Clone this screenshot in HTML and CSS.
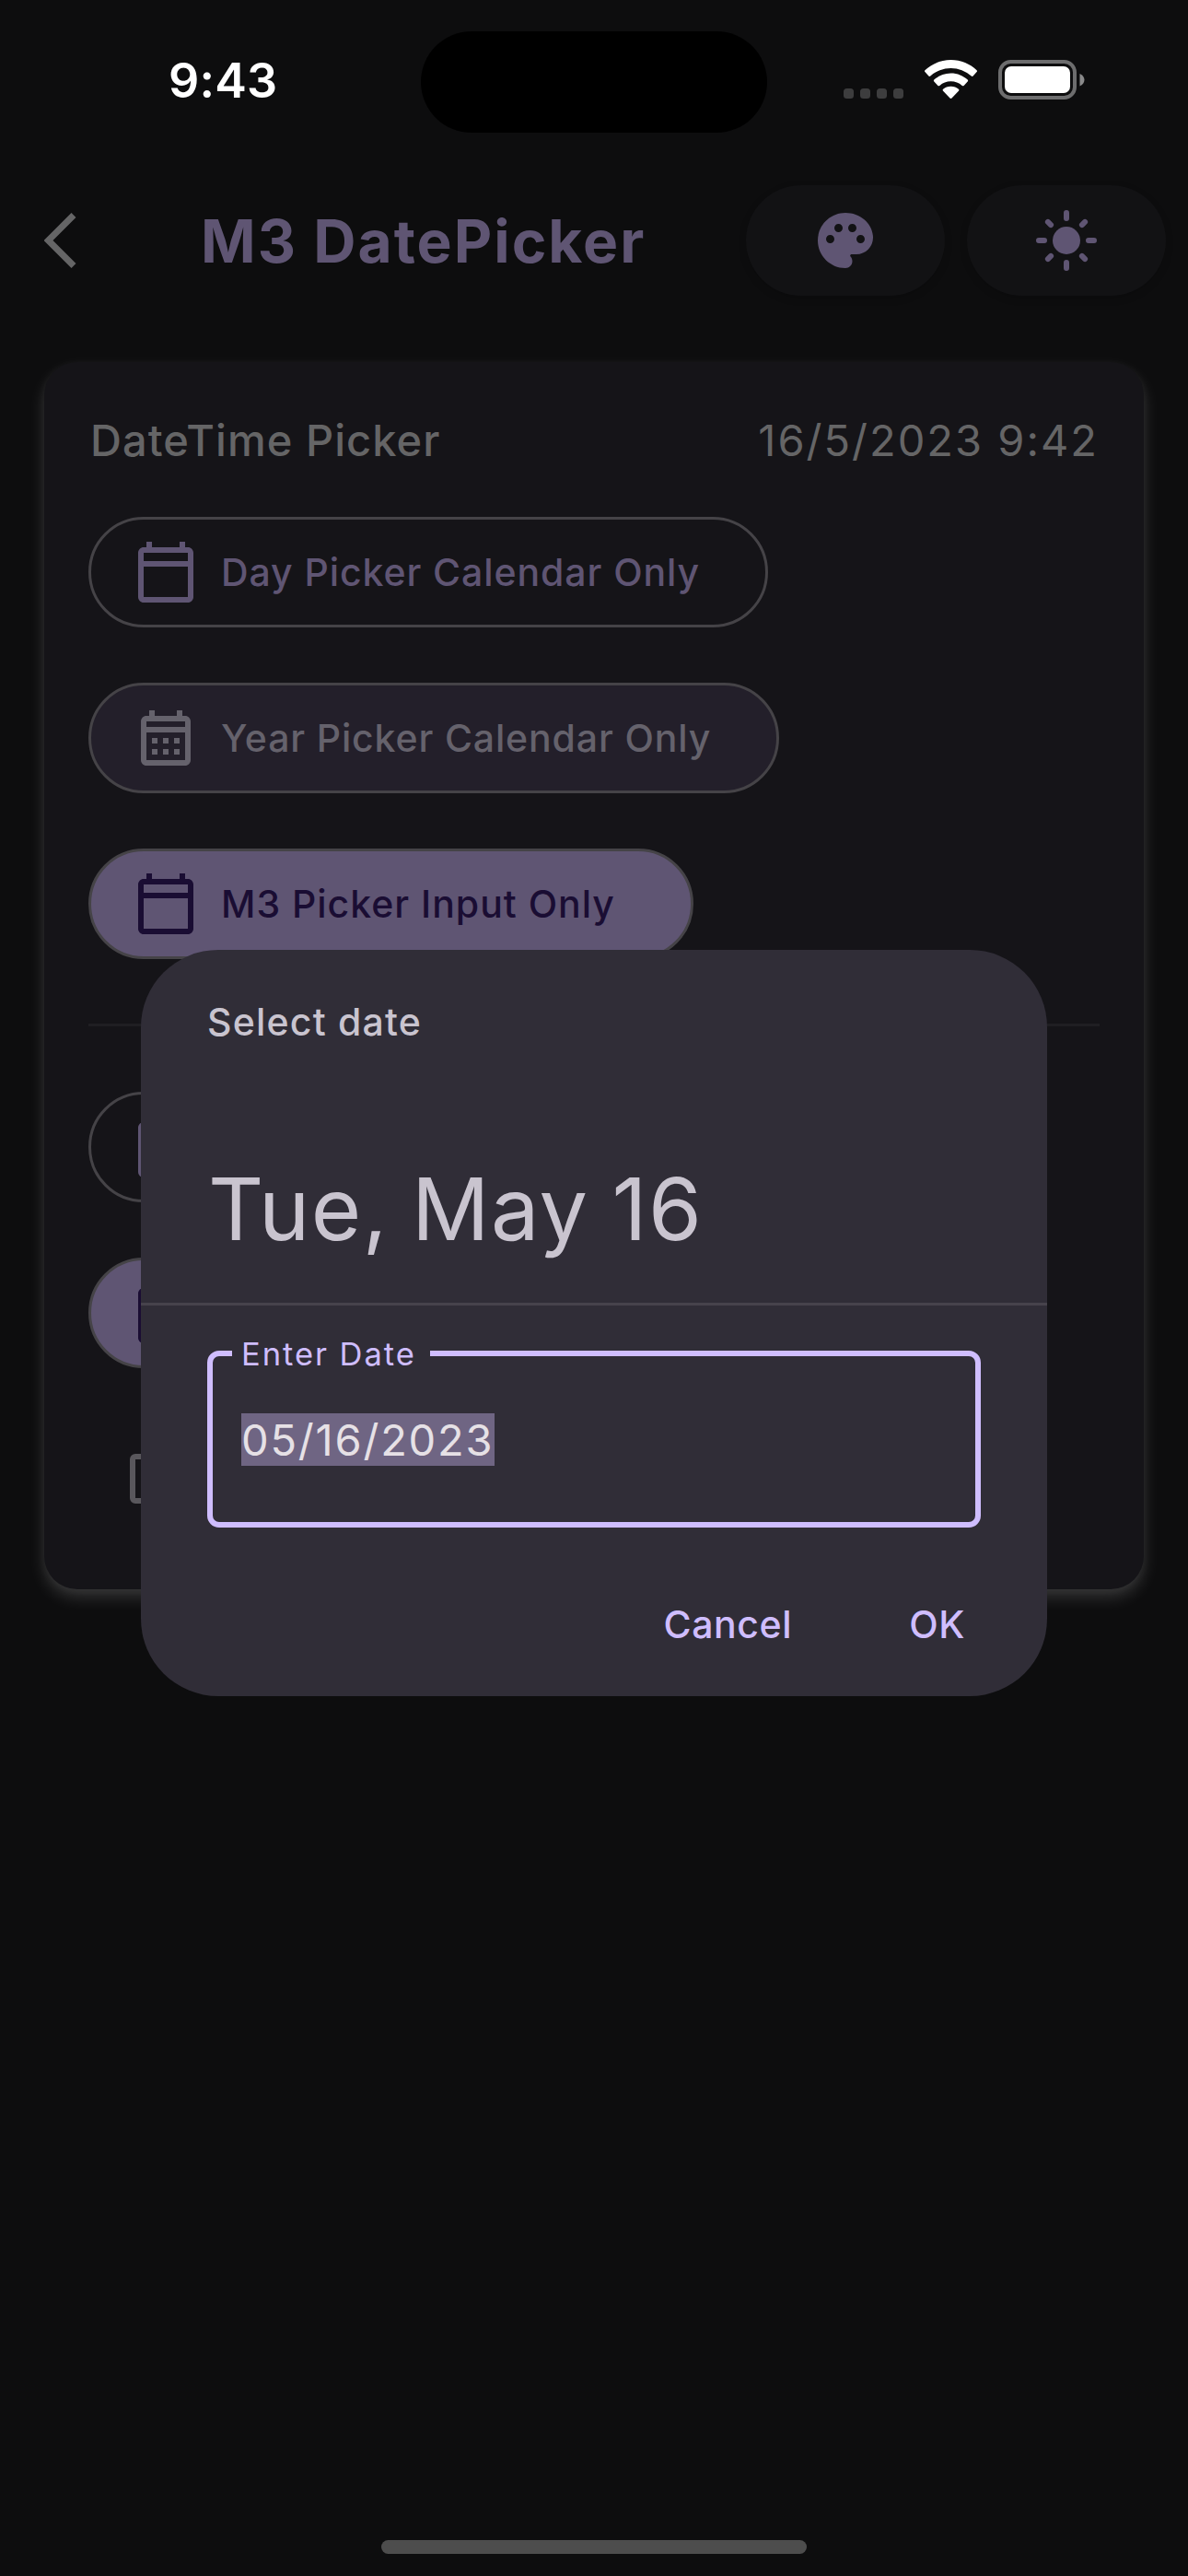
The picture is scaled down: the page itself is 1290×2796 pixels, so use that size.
FILE: index.html
```html
<!DOCTYPE html>
<html lang="en">
<head>
<meta charset="utf-8">
<title>M3 DatePicker</title>
<link rel="stylesheet" href="styles.css">
</head>
<body>
<svg class="sprite" width="0" height="0" aria-hidden="true">
  <symbol id="calendar-today" viewBox="0 0 24 24"><path d="M20 3h-1V1h-2v2H7V1H5v2H4c-1.1 0-2 .9-2 2v16c0 1.1.9 2 2 2h16c1.1 0 2-.9 2-2V5c0-1.1-.9-2-2-2zm0 18H4V10h16v11zm0-13H4V5h16v3z"/></symbol>
  <symbol id="calendar-month" viewBox="0 0 24 24"><path d="M19 4h-1V2h-2v2H8V2H6v2H5c-1.11 0-1.99.9-1.99 2L3 20c0 1.1.89 2 2 2h14c1.1 0 2-.9 2-2V6c0-1.1-.9-2-2-2zm0 16H5V10h14v10zm0-12H5V6h14v2zM9 14H7v-2h2v2zm4 0h-2v-2h2v2zm4 0h-2v-2h2v2zm-8 4H7v-2h2v2zm4 0h-2v-2h2v2zm4 0h-2v-2h2v2z"/></symbol>
</svg>
<div class="screen">
  <header class="status">
    <div class="time">9:43</div>
    <div class="island"></div>
    <div class="indicators">
      <div class="dots"><i></i><i></i><i></i><i></i></div>
      <svg class="wifi" viewBox="0 0 57 42">
        <path d="M28.5 0C39.500 0 49.500 4.300 56.600 11.300Q57.400 12.200 56.600 13.100L52.600 17.600Q51.700 18.500 50.700 17.600A33 33 0 0 0 6.300 17.600Q5.300 18.500 4.400 17.600L.4 13.100Q-.4 12.200.4 11.300C7.500 4.300 17.500 0 28.500 0z"/>
        <path d="M28.500 14.500C35.600 14.500 42 17.200 46.700 21.600Q47.600 22.500 46.700 23.500L42.600 27.900Q41.700 28.800 40.700 27.900A18.400 18.400 0 0 0 16.300 27.900Q15.300 28.800 14.400 27.900L10.300 23.500Q9.400 22.500 10.300 21.600C15 17.200 21.400 14.500 28.500 14.500z"/>
        <path d="M28.500 28.700C31.800 28.700 34.700 29.800 36.900 31.700Q37.900 32.700 36.900 33.700L29.500 41.500Q28.500 42.400 27.500 41.500L20.100 33.700Q19.100 32.700 20.100 31.700C22.300 29.800 25.200 28.700 28.500 28.700z"/>
      </svg>
      <svg class="battery" viewBox="0 0 95 43">
        <rect class="shell" x="2" y="2" width="81" height="39" rx="11.500"/>
        <rect class="level" x="7" y="7" width="71" height="29" rx="7"/>
        <path class="nub" d="M88.500 15v13.500c3-1.300 5-3.800 5-6.750s-2-5.450-5-6.750z"/>
      </svg>
    </div>
  </header>

  <nav class="appbar">
    <svg class="back" viewBox="0 0 36 60"><path d="M32 2.500 4.500 30 32 57.500"/></svg>
    <h1 class="title">M3 DatePicker</h1>
    <div class="actions">
      <div class="action"><svg class="icon" viewBox="0 0 24 24"><path d="M12 2C6.490 2 2 6.490 2 12s4.490 10 10 10c1.380 0 2.500-1.120 2.500-2.500 0-.61-.23-1.200-.64-1.670-.08-.1-.13-.21-.13-.33 0-.28.22-.5.5-.5H16c3.310 0 6-2.690 6-6 0-4.960-4.490-9-10-9zm5.500 11c-.83 0-1.500-.67-1.500-1.500s.67-1.500 1.500-1.500 1.500.67 1.500 1.500-.67 1.500-1.500 1.500zm-3-4c-.83 0-1.500-.67-1.500-1.500S13.670 6 14.500 6s1.500.67 1.500 1.500S15.330 9 14.500 9zM5 11.500c0-.83.67-1.500 1.500-1.500s1.500.67 1.500 1.500S7.330 13 6.500 13 5 12.330 5 11.500zm6-4c0 .83-.67 1.500-1.500 1.500S8 8.330 8 7.500 8.670 6 9.500 6s1.500.67 1.500 1.500z"/></svg></div>
      <div class="action"><svg class="icon sun" viewBox="0 0 24 24"><circle cx="12" cy="12" r="5"/><path d="M12 2v2M12 20v2M2 12h2M20 12h2M5.300 5.300l1.060 1.060M17.640 17.640l1.060 1.060M18.700 5.300l-1.060 1.060M6.360 17.640 5.300 18.700"/></svg></div>
    </div>
  </nav>

  <main class="card">
    <div class="card-head">
      <span class="label">DateTime Picker</span>
      <span class="stamp">16/5/2023 9:42</span>
    </div>
    <div class="group">
      <div class="btn outlined w1"><svg class="icon"><use href="#calendar-today"/></svg><span class="t1">Day Picker Calendar Only</span></div>
      <div class="btn tonal w2"><svg class="icon"><use href="#calendar-month"/></svg><span class="t2">Year Picker Calendar Only</span></div>
      <div class="btn filled w3"><svg class="icon"><use href="#calendar-today"/></svg><span class="t3">M3 Picker Input Only</span></div>
    </div>
    <div class="rule"></div>
    <div class="group">
      <div class="btn outlined w3"><svg class="icon"><use href="#calendar-today"/></svg></div>
      <div class="btn filled w3"><svg class="icon"><use href="#calendar-today"/></svg></div>
      <div class="btn plain w3"><svg class="icon frame" viewBox="0 0 24 24"><rect x="4" y="4" width="16" height="16" rx="1"/></svg></div>
    </div>
  </main>

  <div class="overlay">
    <section class="dialog">
      <div class="dialog-head">
        <div class="hint">Select date</div>
        <div class="headline">Tue, May 16</div>
      </div>
      <div class="field">
        <span class="field-label">Enter Date</span>
        <span class="value">05/16/2023</span>
      </div>
      <div class="dialog-actions">
        <span class="cancel">Cancel</span>
        <span class="ok">OK</span>
      </div>
    </section>
  </div>

  <div class="home"></div>
</div>
</body>
</html>
```
FILE: styles.css
```css
* { box-sizing: border-box; }

body {
  margin: 0;
  background: #0d0d0e;
  font-family: Inter, "Liberation Sans", sans-serif;
}

.sprite { position: absolute; }

.screen {
  position: relative;
  display: flex;
  flex-direction: column;
  width: 1290px;
  height: 2796px;
  overflow: hidden;
  background: #0d0d0e;
}

.icon {
  flex: none;
  width: 72px;
  height: 72px;
  fill: currentColor;
}

/* Status bar */
.status {
  display: grid;
  grid-template-columns: 457px 376px 457px;
  height: 177px;
  padding-top: 34px;
}

.time {
  padding: 23px 0 0 183px;
  color: #fff;
  font-size: 52px;
  font-weight: 600;
  line-height: 62px;
  letter-spacing: 0.2px;
}

.island {
  height: 110px;
  border-radius: 55px;
  background: #000;
}

.indicators {
  display: flex;
  align-items: flex-start;
  padding: 31px 0 0 83px;
}

.dots {
  display: flex;
  gap: 7px;
  margin: 31px 23px 0 0;
}

.dots i {
  width: 11px;
  height: 11px;
  border-radius: 3.500px;
  background: #3d3d3e;
}

.wifi {
  width: 57px;
  height: 42px;
  margin-right: 23px;
  fill: #fff;
}

.battery { width: 95px; height: 43px; }
.shell { fill: none; stroke: #6d6d6e; stroke-width: 4; }
.level { fill: #fff; }
.nub { fill: #8a8a8b; }

/* App bar */
.appbar {
  display: flex;
  align-items: center;
  height: 168px;
  padding: 0 24px 0 48px;
}

.back {
  width: 36px;
  height: 60px;
  fill: none;
  stroke: #656566;
  stroke-width: 7;
}

.title {
  flex: 1;
  margin: 0;
  padding: 1px 0 0 134px;
  color: #5f5573;
  font-size: 64px;
  font-weight: 700;
  line-height: 84px;
  letter-spacing: 2.050px;
  white-space: nowrap;
}

.actions { display: flex; gap: 24px; }

.action {
  display: grid;
  place-items: center;
  width: 216px;
  height: 120px;
  border-radius: 60px;
  background: #121214;
  color: #5f5573;
  box-shadow: 0 3px 9px rgba(0, 0, 0, 0.15);
}

.sun path {
  fill: none;
  stroke: currentColor;
  stroke-width: 2;
  stroke-linecap: round;
}

/* Card */
.card {
  display: flex;
  flex-direction: column;
  height: 1332px;
  margin: 48px 48px 0;
  padding: 48px;
  border-radius: 36px;
  background: #151418;
  box-shadow: 0 9px 18px rgba(255, 255, 255, 0.15), 0 3px 12px rgba(255, 255, 255, 0.05);
}

.card-head {
  display: flex;
  justify-content: space-between;
  height: 120px;
  padding: 0 1px 0 2px;
  color: #656566;
  font-size: 47px;
  line-height: 74px;
  white-space: nowrap;
}

.label { font-weight: 500; letter-spacing: 1.050px; }
.stamp { letter-spacing: 2px; }

.group {
  display: flex;
  flex-direction: column;
  align-items: flex-start;
  gap: 60px;
}

.btn {
  display: flex;
  align-items: center;
  gap: 24px;
  height: 120px;
  padding-left: 45px;
  border: 3px solid #454347;
  border-radius: 60px;
  font-size: 41px;
  font-weight: 500;
  white-space: nowrap;
}

.outlined { color: #5f5573; }
.tonal { background: #231f2a; color: #65626c; }
.filled { background: #5f5573; color: #1a0d33; }
.plain { padding-left: 33px; border-color: transparent; color: #59575c; }
.frame { fill: none; stroke: currentColor; stroke-width: 2; }

.w1 { width: 738px; }
.w2 { width: 750px; }
.w3 { width: 657px; }
.t1 { letter-spacing: 0.920px; }
.t2 { letter-spacing: 0.850px; }
.t3 { letter-spacing: 0.980px; }

.rule {
  height: 3px;
  margin: 70px 0 71px;
  background: #1f1e22;
}

/* Date dialog */
.overlay {
  position: absolute;
  inset: 0;
  display: flex;
  align-items: center;
  justify-content: center;
  padding: 177px 0 102px;
}

.dialog {
  width: 984px;
  height: 810px;
  border-radius: 84px;
  background: #302d37;
  overflow: hidden;
}

.dialog-head {
  height: 386px;
  padding: 48px 72px 0;
  border-bottom: 3px solid #47434c;
  color: #c9c4cf;
  white-space: nowrap;
}

.hint {
  font-size: 41px;
  font-weight: 500;
  line-height: 60px;
  letter-spacing: 1.200px;
}

.headline {
  margin-top: 113px;
  padding-left: 1px;
  font-size: 93.500px;
  line-height: 120px;
  letter-spacing: 1.500px;
  word-spacing: -3px;
}

.field {
  position: relative;
  height: 192px;
  margin: 49px 72px 0;
  padding: 62px 0 0 31px;
  border: 6px solid #cfbdfe;
  border-radius: 13px;
}

.field-label {
  position: absolute;
  top: -23px;
  left: 21px;
  width: 215px;
  padding-left: 10px;
  background: #302d37;
  color: #cfbdfe;
  font-size: 34.500px;
  line-height: 42px;
  letter-spacing: 1.950px;
  white-space: nowrap;
}

.value {
  display: inline-block;
  width: 275px;
  height: 57px;
  background: #6f6583;
  color: #e6e1e6;
  font-size: 47px;
  line-height: 57px;
  letter-spacing: 1.800px;
  white-space: nowrap;
}

.dialog-actions {
  display: flex;
  justify-content: flex-end;
  gap: 127px;
  padding: 75px 89px 0 0;
  color: #cfbdfe;
  font-size: 41px;
  font-weight: 500;
  line-height: 60px;
  letter-spacing: 0.600px;
}

/* Home indicator */
.home {
  position: absolute;
  left: 414px;
  bottom: 24px;
  width: 462px;
  height: 15px;
  border-radius: 8px;
  background: #4d4d4d;
}
```
